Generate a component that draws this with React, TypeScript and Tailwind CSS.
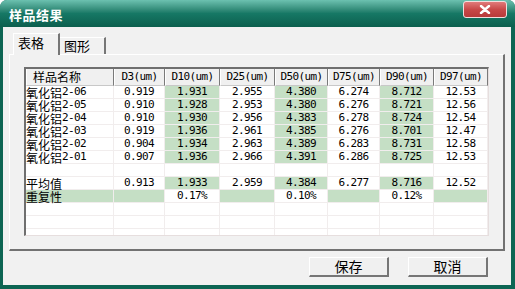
import React from 'react';

const mono = "font-['DejaVu_Sans_Mono',monospace] text-[11px] tracking-[-0.6px] leading-[12px]";

const cols = [
    { name: '样品名称', w: 'w-[88px]' },
    { name: 'D3(um)', w: 'w-[51px]' },
    { name: 'D10(um)', w: 'w-[55px]' },
    { name: 'D25(um)', w: 'w-[55px]' },
    { name: 'D50(um)', w: 'w-[53px]' },
    { name: 'D75(um)', w: 'w-[52px]' },
    { name: 'D90(um)', w: 'w-[54px]' },
    { name: 'D97(um)', w: 'w-[54px]' },
];

const rows: string[][] = [
    ['氧化铝|2-06', '0.919', '1.931', '2.955', '4.380', '6.274', '8.712', '12.53'],
    ['氧化铝|2-05', '0.910', '1.928', '2.953', '4.380', '6.276', '8.721', '12.56'],
    ['氧化铝|2-04', '0.910', '1.930', '2.956', '4.383', '6.278', '8.724', '12.54'],
    ['氧化铝|2-03', '0.919', '1.936', '2.961', '4.385', '6.276', '8.701', '12.47'],
    ['氧化铝|2-02', '0.904', '1.934', '2.963', '4.389', '6.283', '8.731', '12.58'],
    ['氧化铝|2-01', '0.907', '1.936', '2.966', '4.391', '6.286', '8.725', '12.53'],
    ['', '', '', '', '', '', '', ''],
    ['平均值', '0.913', '1.933', '2.959', '4.384', '6.277', '8.716', '12.52'],
    ['重复性', '', '0.17%', '', '0.10%', '', '0.12%', ''],
    ['', '', '', '', '', '', '', ''],
    ['', '', '', '', '', '', '', ''],
    ['', '', '', '', '', '', '', ''],
];

// green fill: picked columns in data rows, inverted in the repeatability row
const isGreen = (r: number, c: number) => {
    const picked = c === 2 || c === 4 || c === 6;
    if (r === 8) return !picked;
    if (r < 6 || r === 7) return picked;
    return false;
};

function Label({ text }: { text: string }) {
    const [cn, num] = text.split('|');
    return (
        <span className="flex items-center h-[13px]">
            <span className="text-[12px] leading-[13px]">{cn}</span>
            {num && <span className={mono}>{num}</span>}
        </span>
    );
}

function Btn({ label }: { label: string }) {
    return (
        <button className="w-[80px] h-[20px] bg-[#f0f0f0] border-t border-l border-t-white border-l-white border-r-2 border-b-2 border-r-[#767676] border-b-[#767676] text-[14px] leading-[17px] text-black">
            {label}
        </button>
    );
}

export default function App() {
    return (
        <div className="w-[515px] h-[289px] flex flex-col bg-[#0d6553] rounded-t-[7px] overflow-hidden font-['Noto_Sans_CJK_SC',sans-serif] text-black">
            {/* title bar */}
            <div className="relative h-[27px] shrink-0 bg-gradient-to-b from-[#6cc1b0] via-[#167865] to-[#0c5f4e] flex items-center">
                <span className="pl-[9px] text-[13px] font-bold text-white tracking-[0.5px] leading-none pt-[2px]">样品结果</span>
                <div className="absolute right-[8px] top-[1px] w-[44px] h-[17px] rounded-[3px] border border-[#f3dede] bg-gradient-to-b from-[#e07a7a] via-[#c84848] to-[#b83a3a] flex items-center justify-center">
                    <svg width="12" height="9" viewBox="0 0 12 9">
                        <path d="M2 1 L10 8 M10 1 L2 8" stroke="white" strokeWidth="2.4" strokeLinecap="round" />
                    </svg>
                </div>
            </div>

            {/* body */}
            <div className="flex-1 ml-[3px] mr-[4px] mb-[4px] bg-[#f1f1f1] pt-[6px] px-[6px] flex flex-col">
                {/* tabs */}
                <div className="flex items-end h-[21px] ml-[4px]">
                    <div className="relative z-10 w-[47px] h-[22px] -mb-[1px] bg-[#f1f1f1] border-t border-l border-t-white border-l-white border-r-2 border-r-[#767676] text-[13px] leading-[18px] pl-[4px]">
                        表格
                    </div>
                    <div className="w-[46px] h-[17px] border-t border-t-white border-r-2 border-r-[#767676] text-[13px] leading-[16px] pl-[4px]">
                        图形
                    </div>
                </div>

                {/* panel */}
                <div className="h-[197px] border-t border-l border-t-white border-l-white border-r-2 border-b-2 border-r-[#727272] border-b-[#727272] pl-[14px] pt-[12px]">
                    <div className="w-[465px] h-[169px] bg-white border-t-2 border-l-2 border-t-[#6f6f6f] border-l-[#6f6f6f] border-r border-b border-r-[#e6dede] border-b-[#e6dede] overflow-hidden">
                        <div className="flex h-[17px] bg-[#f0f0f0]">
                            {cols.map((c, i) => (
                                <div
                                    key={c.name}
                                    className={`${c.w} shrink-0 border-l border-l-white border-r border-r-[#7a7a7a] border-b border-b-[#c8c8c8] flex items-center ${i === 0 ? 'justify-start pl-[6px] text-[12px] leading-[14px]' : 'justify-center ' + mono}`}
                                >
                                    {c.name}
                                </div>
                            ))}
                        </div>
                        {rows.map((r, ri) => (
                            <div key={ri} className="flex h-[13px]">
                                {r.map((v, ci) => (
                                    <div
                                        key={ci}
                                        className={`${cols[ci].w} shrink-0 border-r border-b border-[#f1eded] flex items-center ${ci === 0 ? 'justify-start' : 'justify-center'} ${isGreen(ri, ci) ? 'bg-[#c5dfc5]' : ''}`}
                                    >
                                        {ci === 0 ? <Label text={v} /> : <span className={mono}>{v}</span>}
                                    </div>
                                ))}
                            </div>
                        ))}
                    </div>
                </div>

                {/* buttons */}
                <div className="flex justify-end gap-[19px] mt-[6px] pr-[17px]">
                    <Btn label="保存" />
                    <Btn label="取消" />
                </div>
            </div>
        </div>
    );
}
